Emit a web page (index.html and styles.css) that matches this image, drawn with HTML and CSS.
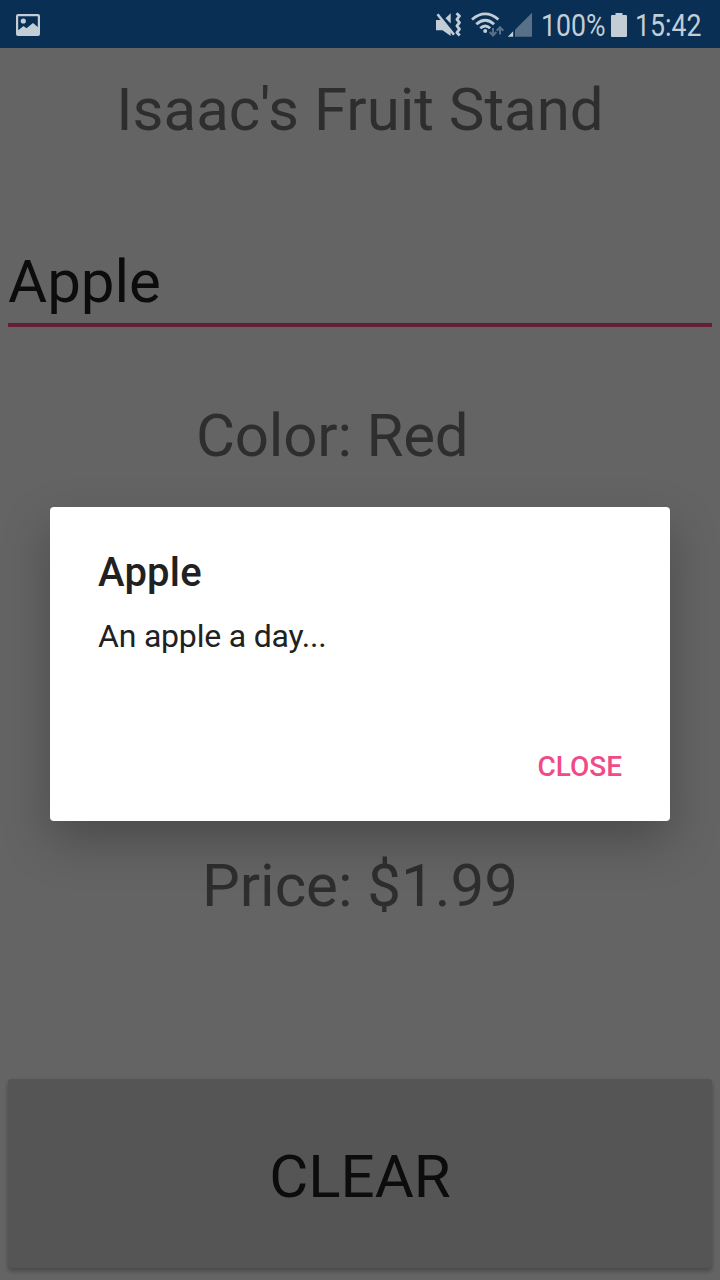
FILE: index.html
```
<!DOCTYPE html>
<html lang="en">
<head>
<meta charset="utf-8">
<title>Isaac's Fruit Stand</title>
<link rel="stylesheet" href="styles.css">
</head>
<body>
<div class="screen">
  <header class="status">
    <svg class="photo" width="24" height="22" viewBox="0 0 24 22"><path fill="#c2cdd6" fill-rule="evenodd" d="M2 0h20a2 2 0 0 1 2 2v18a2 2 0 0 1-2 2H2a2 2 0 0 1-2-2V2a2 2 0 0 1 2-2zM2.2 2.2V16.300L7.500 12l3 2.300L17 9l4.800 4V2.200z"/><circle cx="7.300" cy="7" r="2.600" fill="#c2cdd6"/></svg>
    <div class="tray">
      <svg class="signals" width="98" height="26" viewBox="0 0 98 26">
        <path fill="#c2cdd6" d="M1 8H7L15.700 17.500V24L7.500 18.300H1zM10.500 6.300L15.700 1.300V11.500z"/>
        <path d="M2.500 2.200L19 22.800" stroke="#c2cdd6" stroke-width="2.600"/>
        <path d="M21.500 1.500q4.500 2.500 2 5t0 5t0 5t0 5l1.500 2" fill="none" stroke="#c2cdd6" stroke-width="0"/>
        <path d="M21.500 1.200l3 2.800-2.600 3.300 2.600 3.300-2.600 3.300 2.600 3.300-2.600 3.300 2.800 3" fill="none" stroke="#c2cdd6" stroke-width="2.800" stroke-linejoin="round"/>
        <g fill="none" stroke="#c2cdd6" stroke-width="2.800"><path d="M37 7.500q13.200-11.200 26.400 0M41.300 12.300q8.900-8 17.800 0M45.300 16.300q4.900-4.800 9.800 0"/></g>
        <circle cx="50.200" cy="19" r="2" fill="#c2cdd6"/>
        <path d="M58 16v7.500M54.700 20l3.300 3.500 3.300-3.500M65 22.500V15M61.700 18.800L65 15.300l3.300 3.500" fill="none" stroke="#587088" stroke-width="2"/>
        <path d="M80 17.700L97 .700V24.700H80z" fill="#587088"/>
        <path d="M72.800 24.700l5.400-5.400v5.400z" fill="#c2cdd6"/>
      </svg>
      <span class="pct"><span class="narrow">100%</span></span>
      <svg class="battery" width="16" height="24" viewBox="0 0 16 24"><path d="M4.500 0h7v2H15a1 1 0 0 1 1 1v20a1 1 0 0 1-1 1H1a1 1 0 0 1-1-1V3a1 1 0 0 1 1-1h3.500z" fill="#c2cdd6"/></svg>
      <span class="time"><span class="narrow">15:42</span></span>
    </div>
  </header>
  <main class="content">
    <h1 class="title">Isaac's Fruit Stand</h1>
    <div class="field">Apple</div>
    <div class="color">Color: Red</div>
    <div class="price">Price: $1.99</div>
    <button class="clear">CLEAR</button>
  </main>
  <section class="dialog">
    <h2 class="dialog-title">Apple</h2>
    <p class="dialog-text">An apple a day...</p>
    <button class="close">CLOSE</button>
  </section>
</div>
</body>
</html>
```
FILE: styles.css
```
* { box-sizing: border-box; margin: 0; }
body { font-family: Roboto, sans-serif; }
.screen { position: relative; width: 720px; height: 1280px; background: #646464; overflow: hidden; display: flex; flex-direction: column; }
.status { height: 48px; background: #092f54; color: #c2cdd6; display: flex; justify-content: space-between; align-items: center; padding: 2px 16px 0; }
.tray { display: flex; align-items: center; font-size: 31px; line-height: 36px; }
.signals { margin-right: 8px; }
.pct { width: 70px; padding-top: 1px; }
.time { width: 69px; margin-left: 8px; padding-top: 1px; }
.narrow { display: inline-block; transform: scaleX(.86); transform-origin: left center; }
.content { flex: 1; display: flex; flex-direction: column; padding: 0 8px 12px; color: #2e2e2e; font-size: 60px; line-height: 70px; }
.title { font: inherit; text-align: center; margin-top: 27px; }
.field { margin-top: 102px; height: 80px; border-bottom: 4px solid #641f39; color: #0c0c0c; }
.color { margin: 74px 0 0 188px; letter-spacing: -.2px; }
.price { margin-top: 380px; text-align: center; }
.clear { margin-top: auto; height: 189px; border: 0; border-radius: 4px; background: #555; font: inherit; color: #0c0c0c; padding: 6px 0 0; box-shadow: 0 4px 4px rgba(0,0,0,.18), 0 1px 4px rgba(0,0,0,.12); }
.dialog { position: absolute; left: 50px; top: 507px; width: 620px; height: 314px; background: #fff; border-radius: 4px; padding: 42px 48px 38px; display: flex; flex-direction: column; color: #212121; box-shadow: 0 20px 48px rgba(0,0,0,.25); }
.dialog-title { font-size: 40px; line-height: 47px; font-weight: 500; letter-spacing: .2px; }
.dialog-text { font-size: 32px; line-height: 38px; margin-top: 21px; letter-spacing: -.2px; }
.close { margin: auto 0 0 auto; padding: 0; border: 0; background: none; color: #ef4b87; font: 500 28px/33px Roboto, sans-serif; }
```
